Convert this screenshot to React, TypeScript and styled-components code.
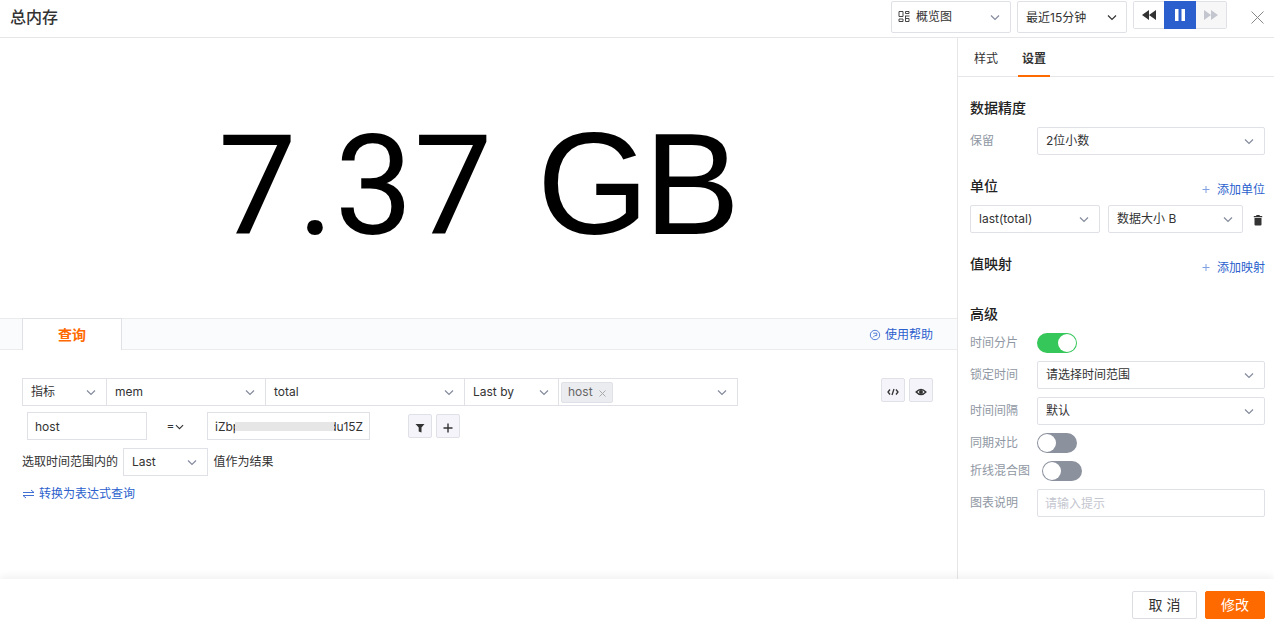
import React from 'react';
import styled, { createGlobalStyle } from 'styled-components';

const Global = createGlobalStyle`
  * { box-sizing: border-box; }
  body {
    margin: 0; overflow: hidden; background: #fff; color: #333;
    font: 12px/18px Inter, "Noto Sans CJK SC", sans-serif;
  }
`;

const Page = styled.div`display: flex; flex-direction: column; height: 626px; width: 1274px;`;

const Header = styled.header`
  display: flex; align-items: flex-start; flex: none;
  height: 38px; padding: 1px 10px 0; border-bottom: 1px solid #e6e6e8;
`;
const Title = styled.h1`margin: 4px auto 0 0; font-size: 16px; line-height: 24px; font-weight: 500;`;

const SelectBox = styled.div<{ $w?: number; $h?: number; $square?: boolean; $gap?: number; $pad?: number }>`
  display: flex; align-items: center; justify-content: space-between; flex: none;
  width: ${p => (p.$w ? `${p.$w}px` : 'auto')}; height: ${p => p.$h ?? 28}px;
  margin-left: ${p => p.$gap ?? 0}px; padding: 0 ${p => p.$pad ?? 10}px 0 8px;
  border: 1px solid #dfe1e7; border-radius: ${p => (p.$square ? 0 : 2)}px; background: #fff;
  white-space: nowrap;
`;
const SelectLabel = styled.span`display: flex; align-items: center; gap: 6px;`;
const ViewLabel = styled(SelectLabel)`
  margin-left: -2px;
  svg { margin-top: -2px; }
`;
const RangeLabel = styled(SelectLabel)`padding-top: 2px;`;
const Playback = styled.div`
  display: flex; width: 94px; height: 28px; margin-left: 6px;
  border: 1px solid #dfe1e7; border-radius: 2px;
`;
const PlayButton = styled.div<{ $bg: string; $active?: boolean }>`
  display: flex; align-items: center; justify-content: center;
  width: ${p => (p.$active ? 32 : 30)}px; background: ${p => p.$bg};
  margin: ${p => (p.$active ? '-1px 0' : '0')};
`;
const CloseButton = styled.div`display: flex; margin: 10px 0 0 24px;`;

const Main = styled.div`display: flex; flex: 1; min-height: 0;`;
const Content = styled.main`width: 957px; flex: none;`;
const Chart = styled.section`
  display: flex; justify-content: flex-start; align-items: center;
  height: 280px; padding: 15px 0 0 218px;
`;
const Value = styled.div`
  display: flex; align-items: baseline; color: #000; white-space: pre;
  font: 370 140px/160px Roboto, sans-serif; letter-spacing: 0.5px;
`;
const Unit = styled.span`
  font: 400 144px/160px "Liberation Sans", sans-serif; letter-spacing: -5px; margin-left: 44px;
`;

const TabBar = styled.div`
  display: flex; align-items: stretch; height: 32px; padding: 0 24px 0 22px;
  border: solid #ebebeb; border-width: 1px 0; background: #fafbfd;
`;
const QueryTab = styled.div`
  display: flex; align-items: center; justify-content: center;
  width: 100px; margin: -1px auto -1px 0; border: solid #dfe1e7; border-width: 1px 1px 0;
  background: #fff; color: #ff6a00; font-size: 14px; font-weight: 600;
`;
const Link = styled.a<{ $gap?: number }>`
  display: inline-flex; align-items: center; gap: ${p => p.$gap ?? 4}px; color: #2b5fcd;
`;
const HelpLink = styled(Link)`padding-top: 2px;`;

const Query = styled.section`display: flex; flex-direction: column; padding: 28px 24px 0 22px;`;
const QueryRow = styled.div<{ $top?: number; $left?: number }>`
  display: flex; align-items: center;
  margin: ${p => p.$top ?? 0}px 0 0 ${p => p.$left ?? 0}px;
`;
const Joined = styled.div`
  display: flex; margin-right: auto;
  & > * + * { margin-left: -1px; }
`;
const Tag = styled.span`
  display: flex; align-items: center; gap: 6px; height: 21px; width: 52px;
  margin-left: -6px; padding: 0 6px; border: 1px solid #dfe1e7; border-radius: 2px;
  background: #ebecf0; color: #666;
  svg { margin-top: 3px; }
`;
const IconButton = styled.button<{ $gap?: number; $up?: boolean }>`
  display: flex; align-items: center; justify-content: center;
  width: 24px; height: 24px; padding: 0; margin-left: ${p => p.$gap ?? 4}px;
  margin-bottom: ${p => (p.$up ? 4 : 0)}px;
  border: 1px solid #dfe1e7; border-radius: 2px; background: #f4f4fa;
`;
const LowIcon = styled.svg`margin-top: 3px;`;
const Field = styled.div<{ $w: number }>`
  display: flex; align-items: center; width: ${p => p.$w}px; height: 28px;
  padding: 1px 0 0 7px; border: 1px solid #dfe1e7; white-space: nowrap;
`;
const Operator = styled.div`
  display: flex; align-items: center; justify-content: center; gap: 1px; width: 60px; padding-right: 3px;
`;
const Redaction = styled.i`
  width: 99px; height: 9px; margin: -1px -3px 0 -5px; background: #e6e6e6; z-index: 1;
`;
const RedactedEnd = styled.span`
  margin-left: -2px; letter-spacing: -.1px;
`;

const Sidebar = styled.aside`flex: 1; border-left: 1px solid #e6e6e8;`;
const SideTabs = styled.nav`
  display: flex; gap: 16px; height: 39px; padding-left: 12px; border-bottom: 1px solid #e6e6e8;
`;
const SideTab = styled.div<{ $active?: boolean }>`
  width: 32px; height: 39px; line-height: 41px; text-align: center;
  font-weight: ${p => (p.$active ? 600 : 400)};
  border-bottom: 2px solid ${p => (p.$active ? '#ff6a00' : 'transparent')};
`;
const Settings = styled.div`padding: 21px 9px 0 12px;`;
const SectionHead = styled.div<{ $top?: number }>`
  display: flex; align-items: flex-start; justify-content: space-between;
  height: 20px; margin-top: ${p => p.$top ?? 0}px;
`;
const SectionTitle = styled.h2`margin: 0; font-size: 14px; line-height: 20px; font-weight: 500; color: #222;`;
const AddLink = styled(Link)`margin-top: 5px;`;
const FormRow = styled.div<{ $top: number; $h?: number }>`
  display: flex; align-items: center; height: ${p => p.$h ?? 28}px; margin-top: ${p => p.$top}px;
`;
const Label = styled.label<{ $w?: number }>`
  width: ${p => p.$w ?? 67}px; flex: none; color: #8f97a3; white-space: nowrap;
`;
const TrashIcon = styled.svg`margin: 2px 0 0 10px;`;
const Toggle = styled.div<{ $on?: boolean }>`
  display: flex; justify-content: ${p => (p.$on ? 'flex-end' : 'flex-start')};
  width: 40px; height: 20px; padding: 1px; border-radius: 10px;
  background: ${p => (p.$on ? '#35c759' : '#8b929e')};
  &::after { content: ''; width: 18px; height: 18px; border-radius: 50%; background: #fff; }
`;
const TextInput = styled.input`
  width: 228px; height: 28px; padding: 0 7px; border: 1px solid #dfe1e7; border-radius: 2px;
  font: inherit; outline: none;
  &::placeholder { color: #c4c6cf; opacity: 1; }
`;

const Footer = styled.footer`
  display: flex; justify-content: flex-end; gap: 8px; flex: none; z-index: 1;
  height: 47px; padding: 12px 9px 0; background: #fff; box-shadow: 0 -3px 8px rgba(0, 0, 0, .06);
`;
const Button = styled.button<{ $primary?: boolean }>`
  width: ${p => (p.$primary ? 60 : 65)}px; height: 28px; padding: 0;
  font: 14px/24px Inter, "Noto Sans CJK SC", sans-serif; border-radius: 2px;
  border: 1px solid ${p => (p.$primary ? '#ff6a00' : '#dcdee3')};
  background: ${p => (p.$primary ? '#ff6a00' : '#fff')}; color: ${p => (p.$primary ? '#fff' : '#333')};
`;

const Chevron = ({ color = '#848b9c', size = 10 }: { color?: string; size?: number }) => (
  <svg width={size} height={size} viewBox="0 0 10 10" fill="none" stroke={color} strokeWidth="1.2">
    <path d="M1 3.5 5 7.5 9 3.5" />
  </svg>
);
const Cross = ({ size, color }: { size: number; color: string }) => (
  <svg width={size} height={size} viewBox={`0 0 ${size} ${size}`} stroke={color}>
    <path d={`M.5.5 ${size - 0.5} ${size - 0.5}M${size - 0.5}.5.5 ${size - 0.5}`} />
  </svg>
);
const Plus = () => (
  <svg width="8" height="8" viewBox="0 0 8 8" stroke="#7f9fe0"><path d="M.5 3.5H7.5M4 0V7" /></svg>
);

const Select = ({ label, arrow, ...box }: {
  label: React.ReactNode; arrow?: string; $w?: number; $h?: number; $square?: boolean; $gap?: number; $pad?: number;
}) => (
  <SelectBox {...box}><SelectLabel>{label}</SelectLabel><Chevron color={arrow} /></SelectBox>
);

export default function App() {
  return (
    <Page>
      <Global />
      <Header>
        <Title>总内存</Title>
        <Select $w={120} $h={32} label={<ViewLabel>
          <svg width="12" height="12" viewBox="0 0 12 12" fill="none" stroke="#444">
            <path d="M1 1.5H5V6.5H1ZM7.5 1.5H11V3.5H7.5ZM1 9H5V11.5H1ZM7 6H11.5M7.5 6V11.5H11V8.5H7.5" />
          </svg>概览图</ViewLabel>} />
        <Select $w={110} $h={32} $gap={6} $pad={9} label={<RangeLabel>最近15分钟</RangeLabel>} arrow="#333" />
        <Playback>
          <PlayButton $bg="#fff">
            <svg width="14" height="10" viewBox="0 0 14 10" fill="#333"><path d="M7 0V10L0 5ZM14 0V10L7 5Z" /></svg>
          </PlayButton>
          <PlayButton $bg="#2b5fcd" $active>
            <svg width="10" height="12" viewBox="0 0 10 12" fill="#fff"><path d="M0 0H3.5V12H0ZM6.5 0H10V12H6.5Z" /></svg>
          </PlayButton>
          <PlayButton $bg="#f7f7f7">
            <svg width="14" height="10" viewBox="0 0 14 10" fill="#c4c6cf"><path d="M0 0V10L7 5ZM7 0V10L14 5Z" /></svg>
          </PlayButton>
        </Playback>
        <CloseButton><Cross size={13} color="#888" /></CloseButton>
      </Header>

      <Main>
        <Content>
          <Chart><Value>7.37<Unit>GB</Unit></Value></Chart>
          <TabBar>
            <QueryTab>查询</QueryTab>
            <HelpLink>
              <svg width="12" height="12" viewBox="0 0 12 12" fill="none" stroke="#2b5fcd" strokeWidth=".8">
                <circle cx="6" cy="6" r="4.7" /><path d="M4.2 4.2H7.8V6.6H5.8M5.8 6.6 4 8.4" />
              </svg>使用帮助
            </HelpLink>
          </TabBar>
          <Query>
            <QueryRow>
              <Joined>
                <Select $square $w={85} label="指标" />
                <Select $square $w={160} label="mem" />
                <Select $square $w={200} label="total" />
                <Select $square $w={95} $pad={9} label="Last by" />
                <Select $square $w={180} label={<Tag>host<Cross size={7} color="#aaa" /></Tag>} />
              </Joined>
              <IconButton $up>
                <LowIcon width="12" height="10" viewBox="0 0 12 10" fill="none" stroke="#333" strokeWidth="1.3">
                  <path d="M3 2.5 1 5 3 7.5M9 2.5 11 5 9 7.5M7 2 5 8" />
                </LowIcon>
              </IconButton>
              <IconButton $up>
                <LowIcon width="12" height="10" viewBox="0 0 12 10" fill="none" stroke="#333" strokeWidth="1.5">
                  <path d="M1.2 5Q6-.2 10.8 5Q6 10.2 1.2 5Z" /><circle cx="6" cy="5" r="1.2" fill="#333" />
                </LowIcon>
              </IconButton>
            </QueryRow>
            <QueryRow $top={6} $left={5}>
              <Field $w={120}>host</Field>
              <Operator>=<Chevron color="#333" size={9} /></Operator>
              <Field $w={163}>iZbp<Redaction /><RedactedEnd>du15Z</RedactedEnd></Field>
              <IconButton $gap={38}>
                <LowIcon width="10" height="10" viewBox="0 0 10 10" fill="#333"><path d="M.5 1H9.5L6.5 4.5V9.5L3.7 8.5V4.5Z" /></LowIcon>
              </IconButton>
              <IconButton>
                <LowIcon width="10" height="10" viewBox="0 0 10 10" stroke="#333" strokeWidth="1.4"><path d="M.5 5H9.5M5 .5V9.5" /></LowIcon>
              </IconButton>
            </QueryRow>
            <QueryRow $top={8}>
              选取时间范围内的<Select $square $gap={5} $w={85} label="Last" />
              <SelectLabel>&nbsp;&#8201;值作为结果</SelectLabel>
            </QueryRow>
            <QueryRow $top={9}>
              <Link>
                <svg width="13" height="10" viewBox="0 0 13 10" fill="none" stroke="#2b5fcd" strokeWidth=".9"><path d="M1 3.5H12L9 1M12 6.5H1L4 9" /></svg>
                转换为表达式查询
              </Link>
            </QueryRow>
          </Query>
        </Content>

        <Sidebar>
          <SideTabs><SideTab>样式</SideTab><SideTab $active>设置</SideTab></SideTabs>
          <Settings>
            <SectionHead><SectionTitle>数据精度</SectionTitle></SectionHead>
            <FormRow $top={9}><Label>保留</Label><Select $w={228} label="2位小数" /></FormRow>
            <SectionHead $top={21}>
              <SectionTitle>单位</SectionTitle><AddLink $gap={7}><Plus />添加单位</AddLink>
            </SectionHead>
            <FormRow $top={9}>
              <Select $w={130} label="last(total)" /><Select $w={135} $gap={8} $pad={9} label="数据大小 B" />
              <TrashIcon width="10" height="12" viewBox="0 0 10 12" fill="#333">
                <path d="M3.3 1H6.7V2H9.2V3.2H.8V2H3.3ZM1.5 4H8.5V10.5Q8.5 11.5 7.5 11.5H2.5Q1.5 11.5 1.5 10.5Z" />
              </TrashIcon>
            </FormRow>
            <SectionHead $top={21}>
              <SectionTitle>值映射</SectionTitle><AddLink $gap={7}><Plus />添加映射</AddLink>
            </SectionHead>
            <SectionHead $top={30}><SectionTitle>高级</SectionTitle></SectionHead>
            <FormRow $top={9} $h={20}><Label>时间分片</Label><Toggle $on /></FormRow>
            <FormRow $top={8}><Label>锁定时间</Label><Select $w={228} label="请选择时间范围" /></FormRow>
            <FormRow $top={8}><Label>时间间隔</Label><Select $w={228} label="默认" /></FormRow>
            <FormRow $top={8} $h={20}><Label>同期对比</Label><Toggle /></FormRow>
            <FormRow $top={8} $h={20}><Label $w={72}>折线混合图</Label><Toggle /></FormRow>
            <FormRow $top={8}><Label>图表说明</Label><TextInput placeholder="请输入提示" /></FormRow>
          </Settings>
        </Sidebar>
      </Main>

      <Footer><Button>取 消</Button><Button $primary>修改</Button></Footer>
    </Page>
  );
}
